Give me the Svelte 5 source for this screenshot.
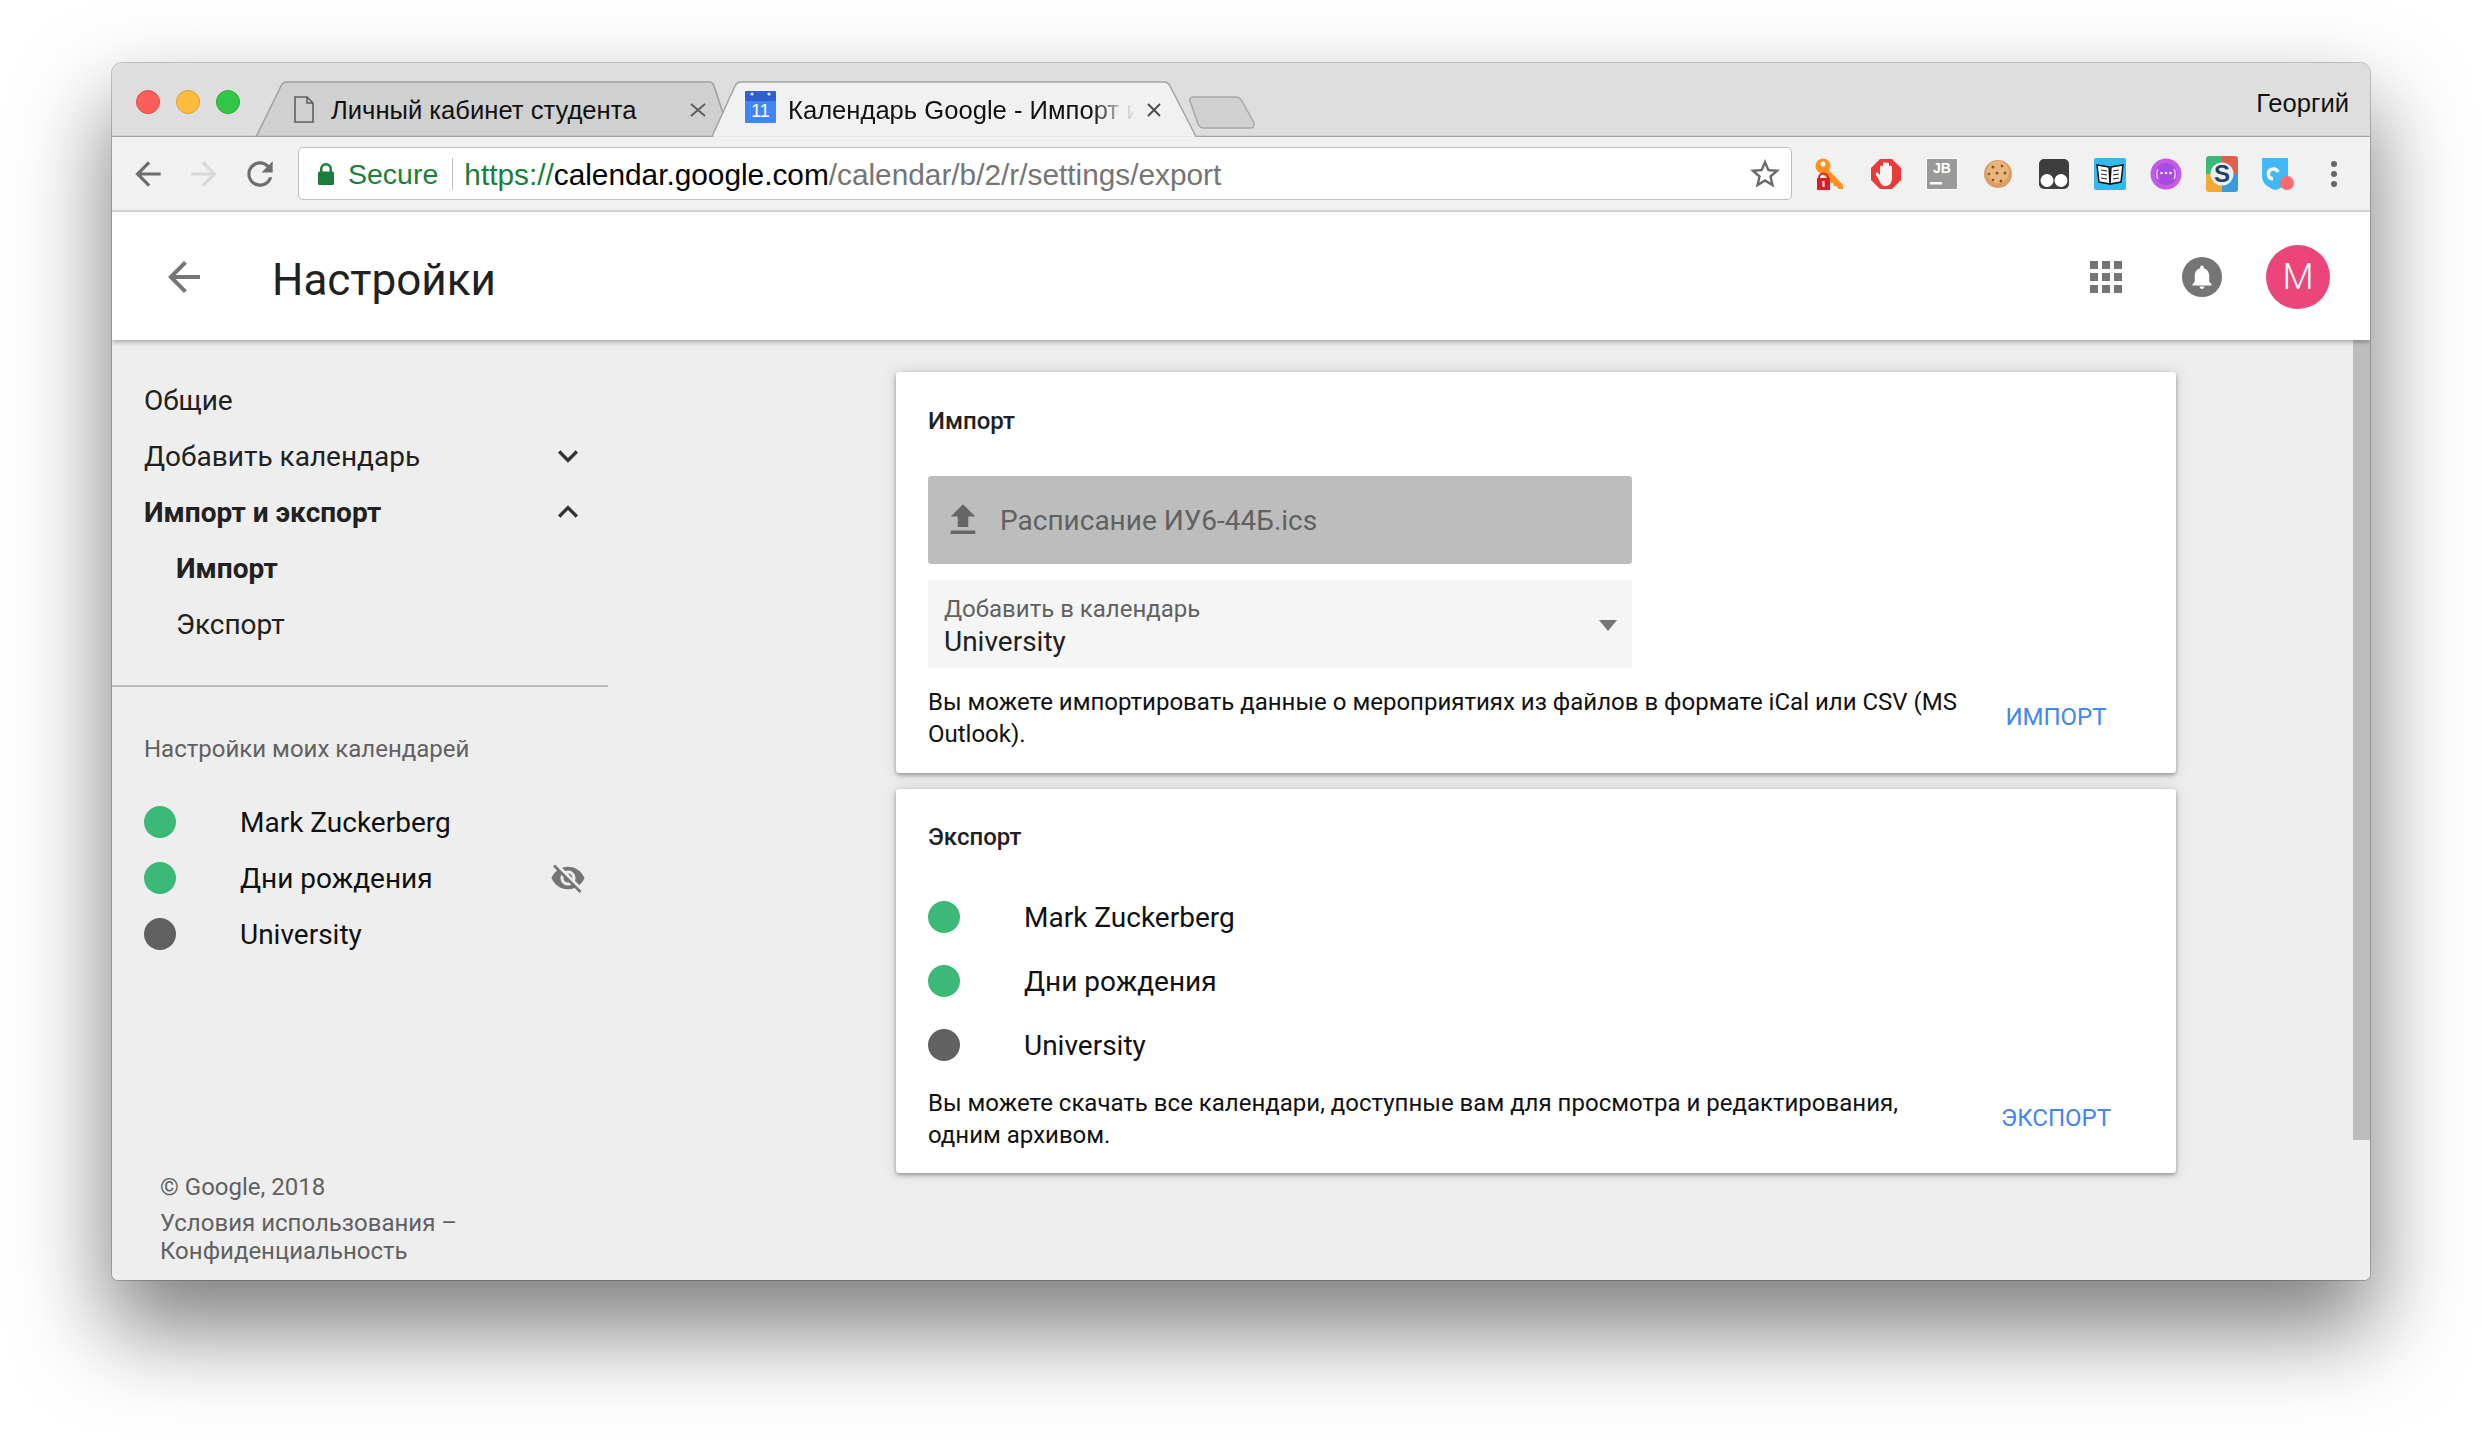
<script>
  const calendars = [
    { name: 'Mark Zuckerberg', color: '#3cb878' },
    { name: 'Дни рождения', color: '#3cb878', hidden: true },
    { name: 'University', color: '#616161' }
  ];
</script>

<div class="window">
  <div class="titlebar">
    <svg class="tabshapes" width="2258" height="74" viewBox="0 0 2258 74">
      <path d="M144 74 L169 23 Q171 19 175 19 L597 19 Q601 19 602 23 L613 56 L601 74 Z" fill="#d0d0d0" stroke="#a0a0a0" stroke-width="1.5"/>
      <path d="M0 73.5 H600 L623 23 Q625 19 629 19 L1052 19 Q1056 19 1058 23 L1084 73.5 H2258" fill="#f1f1f1" stroke="#a4a4a4" stroke-width="1.5"/>
      <path d="M1078 38 Q1077 34 1082 34 H1123 Q1128 34 1130 38 L1142 60 Q1143 65 1138 65 H1092 Q1088 65 1086 61 Z" fill="#d0d0d0" stroke="#a8a8a8" stroke-width="1.5"/>
    </svg>
    <div class="lights">
      <span class="light red"></span><span class="light yellow"></span><span class="light green"></span>
    </div>
    <div class="tab first">
      <svg class="fileicon" width="20" height="27" viewBox="0 0 20 27"><path d="M1 1 H13 L19 7 V26 H1 Z M13 1 V7 H19" fill="none" stroke="#5f5f5f" stroke-width="1.6"/></svg>
      <span class="tabtitle">Личный кабинет студента</span>
      <svg class="close" width="16" height="14" viewBox="0 0 16 14"><path d="M1 1 L15 13 M15 1 L1 13" stroke="#5a5a5a" stroke-width="1.8"/></svg>
    </div>
    <div class="tab second">
      <svg class="calfav" width="31" height="32" viewBox="0 0 31 32">
        <rect x="0" y="3" width="31" height="29" rx="1" fill="#4285f4"/>
        <rect x="0" y="0" width="31" height="10" rx="1" fill="#2f5fcf"/>
        <circle cx="7" cy="3" r="1.6" fill="#dfe6f7"/><circle cx="24" cy="3" r="1.6" fill="#dfe6f7"/>
        <text x="15.5" y="26" text-anchor="middle" class="caltext">11</text>
      </svg>
      <span class="tabtitle fade">Календарь Google - Импорт и</span>
      <svg class="close" width="14" height="14" viewBox="0 0 14 14"><path d="M1 1 L13 13 M13 1 L1 13" stroke="#4a4a4a" stroke-width="1.8"/></svg>
    </div>
    <div class="user">Георгий</div>
  </div>

  <div class="toolbar">
    <div class="navbtns">
      <svg width="38" height="38" viewBox="0 0 24 24"><path fill="#6e6e6e" d="M20 11H7.83l5.59-5.59L12 4l-8 8 8 8 1.41-1.41L7.83 13H20v-2z"/></svg>
      <svg width="38" height="38" viewBox="0 0 24 24"><path fill="#d8d8d8" d="M4 11h12.17l-5.59-5.59L12 4l8 8-8 8-1.41-1.41L16.17 13H4v-2z"/></svg>
      <svg width="38" height="38" viewBox="0 0 24 24"><path fill="#6e6e6e" d="M17.65 6.35C16.2 4.9 14.21 4 12 4c-4.42 0-7.99 3.58-7.99 8s3.57 8 7.99 8c3.73 0 6.84-2.55 7.73-6h-2.08c-.82 2.33-3.04 4-5.65 4-3.31 0-6-2.69-6-6s2.69-6 6-6c1.66 0 3.14.69 4.22 1.78L13 11h7V4l-2.35 2.35z"/></svg>
    </div>
    <div class="omnibox">
      <svg class="lock" width="18" height="22" viewBox="0 0 18 22"><path fill="#188038" d="M15.5 8.5H15V6A6 6 0 0 0 3 6v2.5h-.5A1.5 1.5 0 0 0 1 10v10.500A1.500 1.500 0 0 0 2.500 22h13a1.500 1.500 0 0 0 1.500-1.500V10a1.500 1.500 0 0 0-1.500-1.500zM12.500 8.500h-7V6a3.500 3.500 0 0 1 7 0z"/></svg>
      <span class="secure">Secure</span>
      <span class="omnidiv"></span>
      <span class="url"><span class="https">https://</span><span class="host">calendar.google.com</span><span class="path">/calendar/b/2/r/settings/export</span></span>
      <svg class="star" width="36" height="36" viewBox="0 0 24 24"><path fill="#6a6a6a" d="M22 9.24l-7.190-.62L12 2 9.190 8.630 2 9.240l5.460 4.730L5.820 21 12 17.270 18.180 21l-1.630-7.030L22 9.240zM12 15.400l-3.760 2.270 1-4.280-3.320-2.880 4.380-.38L12 6.100l1.710 4.040 4.380.38-3.320 2.880 1 4.280L12 15.400z"/></svg>
    </div>
    <div class="extensions">
      <svg width="32" height="32" viewBox="0 0 32 32">
        <circle cx="9" cy="8" r="7.500" fill="#ff9020"/><path d="M9 6 L29 27 V31 H25 L22 28 L20 28 L19 25 L17 25 L6 13Z" fill="#ff9020"/>
        <circle cx="9" cy="6" r="2.500" fill="#fff"/>
        <path d="M5 20 a4.500 4.500 0 0 1 9 0" fill="none" stroke="#d9202a" stroke-width="2"/><rect x="3" y="20" width="13" height="12" fill="#d9202a"/><rect x="8.500" y="23" width="2" height="6" fill="#fff"/>
      </svg>
      <svg width="32" height="32" viewBox="0 0 32 32">
        <path d="M10 1 H22 L31 10 V22 L22 31 H10 L1 22 V10 Z" fill="#ea3a3a"/>
        <path d="M10 15 V9 a1.500 1.500 0 0 1 3 0 V5.500 a1.500 1.500 0 0 1 3 0 V6 a1.500 1.500 0 0 1 3 0 V9 a1.500 1.500 0 0 1 3 0 V20 c0 5-3 8-6 8 c-4 0-5-2-7-6 l-3-5 c-1-2 1-3 2-2 l2 2z" fill="#f4f4f4"/>
      </svg>
      <svg width="32" height="32" viewBox="0 0 32 32">
        <rect width="32" height="32" fill="#fff"/><rect x="1" y="1" width="30" height="30" fill="#9a9a9a"/>
        <text x="16" y="15" text-anchor="middle" class="jbtext">JB</text><rect x="4" y="24" width="12" height="2.500" fill="#fff"/>
      </svg>
      <svg width="32" height="32" viewBox="0 0 32 32">
        <circle cx="16" cy="16" r="14" fill="#d9a066"/><circle cx="16" cy="14" r="11" fill="#e8b57c"/>
        <g fill="#8a5526"><circle cx="11" cy="9" r="1.500"/><circle cx="20" cy="8" r="1.300"/><circle cx="7" cy="16" r="1.300"/><circle cx="15" cy="15" r="1.500"/><circle cx="23" cy="15" r="1.500"/><circle cx="11" cy="22" r="1.300"/><circle cx="19" cy="23" r="1.500"/></g>
      </svg>
      <svg width="32" height="32" viewBox="0 0 32 32">
        <rect x="1" y="1" width="30" height="30" rx="5" fill="#3e3e3e"/>
        <circle cx="9" cy="22.500" r="6.500" fill="#fff"/><circle cx="23" cy="22.500" r="6.500" fill="#fff"/>
      </svg>
      <svg width="32" height="32" viewBox="0 0 32 32">
        <rect width="32" height="32" rx="2" fill="#35b8ec"/>
        <path d="M3 7 L15 9 L16 26 L5 24Z M29 7 L17 9 L16 26 L27 24Z" fill="#fff" stroke="#111" stroke-width="1.500"/>
        <path d="M7 12 L13 13 M7 16 L13 17 M7 20 L13 21 M25 12 L19 13 M25 16 L19 17 M25 20 L19 21" stroke="#222" stroke-width="1.200"/>
      </svg>
      <svg width="32" height="32" viewBox="0 0 32 32">
        <circle cx="16" cy="16" r="15.500" fill="#c25be8"/><circle cx="16" cy="16" r="11" fill="#a94be0"/>
        <path d="M8 11 Q5.500 16 8 21 M24 11 Q26.500 16 24 21" fill="none" stroke="#e6c2f5" stroke-width="1.500"/>
        <circle cx="11.500" cy="15" r="1.300" fill="#eee"/><circle cx="16" cy="15" r="1.300" fill="#eee"/><circle cx="20.500" cy="15" r="1.300" fill="#eee"/>
      </svg>
      <svg width="32" height="36" viewBox="0 0 32 36">
        <path d="M3 0 H16 V18 H0 V3 A3 3 0 0 1 3 0Z" fill="#3cb878"/><path d="M16 0 H29 A3 3 0 0 1 32 3 V18 H16Z" fill="#e0604f"/>
        <path d="M0 18 H16 V36 H3 A3 3 0 0 1 0 33Z" fill="#f3a833"/><path d="M16 18 H32 V33 A3 3 0 0 1 29 36 H16Z" fill="#3a9bd9"/>
        <circle cx="16" cy="18" r="11.500" fill="#e9eef2"/>
        <text x="16" y="26" text-anchor="middle" class="stext">S</text>
      </svg>
      <svg width="32" height="32" viewBox="0 0 32 32">
        <path d="M0 0 H26 V20 C26 27 18 31 13 32 C7 30 0 26 0 18 Z" fill="#41b8f8"/>
        <path d="M16 14 a5 5 0 1 0 -5 7" fill="none" stroke="#fff" stroke-width="3.500"/>
        <circle cx="25" cy="25" r="7" fill="#fa6a70"/>
      </svg>
      <svg class="menu" width="8" height="28" viewBox="0 0 8 28"><circle cx="4" cy="4" r="3" fill="#666"/><circle cx="4" cy="14" r="3" fill="#666"/><circle cx="4" cy="24" r="3" fill="#666"/></svg>
    </div>
  </div>

  <header class="appbar">
    <svg class="backarrow" width="48" height="48" viewBox="0 0 24 24"><path fill="#757575" d="M20 11H7.830l5.590-5.590L12 4l-8 8 8 8 1.410-1.410L7.830 13H20v-2z"/></svg>
    <h1>Настройки</h1>
    <svg class="apps" width="32" height="32" viewBox="0 0 32 32">
      {#each [0, 12, 24] as y}{#each [0, 12, 24] as x}<rect {x} {y} width="8" height="8" fill="#757575"/>{/each}{/each}
    </svg>
    <svg class="bell" width="40" height="40" viewBox="0 0 40 40">
      <circle cx="20" cy="20" r="20" fill="#757575"/>
      <path transform="translate(5.600 5.600) scale(1.200)" fill="#fff" d="M12 22c1.100 0 2-.9 2-2h-4c0 1.100.89 2 2 2zm6-6v-5c0-3.070-1.640-5.640-4.500-6.320V4c0-.83-.67-1.500-1.500-1.500s-1.500.67-1.500 1.500v.68C7.630 5.360 6 7.920 6 11v5l-2 2v1h16v-1l-2-2z"/>
    </svg>
    <div class="avatar">M</div>
  </header>

  <div class="body">
    <aside class="sidebar">
      <nav>
        <div class="item">Общие</div>
        <div class="item">Добавить календарь
          <svg class="chev" width="40" height="40" viewBox="0 0 24 24"><path fill="#333" d="M16.590 8.590L12 13.170 7.410 8.590 6 10l6 6 6-6z"/></svg>
        </div>
        <div class="item strong">Импорт и экспорт
          <svg class="chev" width="40" height="40" viewBox="0 0 24 24"><path fill="#333" d="M12 8l-6 6 1.410 1.410L12 10.830l4.590 4.580L18 14z"/></svg>
        </div>
        <div class="item sub strong">Импорт</div>
        <div class="item sub">Экспорт</div>
      </nav>
      <div class="divider"></div>
      <div class="sidehead">Настройки моих календарей</div>
      <div class="callist">
        {#each calendars as c}
          <div class="calrow">
            <span class="dot" style="background:{c.color}"></span>
            <span class="calname">{c.name}</span>
            {#if c.hidden}
              <svg class="eye" width="36" height="36" viewBox="0 0 24 24"><path fill="#757575" d="M12 7c2.760 0 5 2.240 5 5 0 .65-.13 1.260-.36 1.830l2.920 2.920c1.510-1.260 2.700-2.890 3.430-4.750-1.730-4.390-6-7.500-11-7.500-1.400 0-2.740.25-3.980.7l2.160 2.160C10.740 7.130 11.350 7 12 7zM2 4.270l2.280 2.280.46.46C3.080 8.300 1.780 10.020 1 12c1.730 4.390 6 7.500 11 7.500 1.550 0 3.030-.3 4.380-.84l.42.42L19.730 22 21 20.730 3.270 3 2 4.270zM7.530 9.800l1.550 1.550c-.05.21-.08.43-.08.65 0 1.660 1.340 3 3 3 .22 0 .44-.03.65-.08l1.550 1.550c-.67.33-1.410.53-2.200.53-2.760 0-5-2.240-5-5 0-.79.2-1.530.53-2.200zm4.310-.78l3.150 3.150.02-.16c0-1.660-1.340-3-3-3l-.17.01z"/></svg>
            {/if}
          </div>
        {/each}
      </div>
      <footer class="sidefoot">
        <div class="copy">© Google, 2018</div>
        <div>Условия использования –</div>
        <div>Конфиденциальность</div>
      </footer>
    </aside>

    <main class="content">
      <section class="card importcard">
        <h2>Импорт</h2>
        <div class="upload">
          <svg width="42" height="42" viewBox="0 0 24 24"><path fill="#666" d="M9 16h6v-6h4l-7-7-7 7h4zm-4 2h14v2H5z"/></svg>
          <span>Расписание ИУ6-44Б.ics</span>
        </div>
        <div class="select">
          <div class="sellabel">Добавить в календарь</div>
          <div class="selvalue">University</div>
          <span class="selarrow"></span>
        </div>
        <div class="cardfoot">
          <p>Вы можете импортировать данные о мероприятиях из файлов в формате iCal или CSV (MS Outlook).</p>
          <span class="action">ИМПОРТ</span>
        </div>
      </section>

      <section class="card exportcard">
        <h2>Экспорт</h2>
        <div class="explist">
          {#each calendars as c}
            <div class="exprow">
              <span class="dot" style="background:{c.color}"></span>
              <span class="expname">{c.name}</span>
            </div>
          {/each}
        </div>
        <div class="cardfoot second">
          <p>Вы можете скачать все календари, доступные вам для просмотра и редактирования, одним архивом.</p>
          <span class="action">ЭКСПОРТ</span>
        </div>
      </section>
    </main>
    <div class="scrollbar"></div>
  </div>
</div>

<style>
  :global(body) { margin: 0; background: #fff; overflow: hidden; height: 1440px; }
  .window {
    position: relative;
    width: 2258px; height: 1217px;
    margin: 63px 0 0 112px;
    border-radius: 10px 10px 6px 6px;
    overflow: hidden;
    font-family: Roboto, sans-serif;
    color: #212121;
    box-shadow: 0 0 0 1px rgba(0,0,0,.2), 0 46px 90px 4px rgba(0,0,0,.5);
  }
  .titlebar {
    position: relative;
    height: 74px;
    background: #dedede;
    display: flex;
    align-items: flex-start;
    font-family: "Liberation Sans", sans-serif;
    color: #111;
    box-sizing: border-box;
  }
  .tabshapes { position: absolute; left: 0; top: 0; }
  .lights { position: relative; display: flex; gap: 16px; margin: 27px 0 0 24px; width: 120px; flex: none; }
  .light { width: 24px; height: 24px; border-radius: 50%; box-sizing: border-box; }
  .red { background: #fc5f5a; border: 1px solid #e04a45; }
  .yellow { background: #fdbc3d; border: 1px solid #dfa030; }
  .green { background: #33c748; border: 1px solid #27ab38; }
  .tab { position: relative; display: flex; align-items: center; height: 42px; margin-top: 26px; flex: none; }
  .tab.first { margin-left: 38px; width: 420px; }
  .fileicon { margin-right: 17px; flex: none; margin-top: -2px; }
  .tabtitle { font-size: 25.600px; white-space: nowrap; }
  .tab.first .close { margin-left: 54px; flex: none; }
  .tab.second { margin-left: 31px; width: 420px; }
  .calfav { flex: none; margin-right: 12px; margin-top: -6px; }
  .caltext { font: 18px "Liberation Sans", sans-serif; fill: #fff; }
  .jbtext { font: 700 14px "Liberation Sans", sans-serif; fill: #fff; }
  .stext { font: 700 24px "Liberation Sans", sans-serif; fill: #24425e; }
  .fade {
    width: 345px; flex: none;
    -webkit-mask-image: linear-gradient(to right, #000 305px, rgba(0,0,0,.12) 335px);
    mask-image: linear-gradient(to right, #000 305px, rgba(0,0,0,.12) 335px);
  }
  .tab.second .close { margin-left: 14px; flex: none; }
  .user { position: absolute; right: 21px; top: 25px; font-size: 25.600px; line-height: 30px; }

  .toolbar {
    height: 75px;
    background: #f1f1f1;
    border-bottom: 2px solid #d8d8d8;
    box-sizing: border-box;
    display: flex;
    align-items: center;
  }
  .navbtns { display: flex; align-items: center; width: 186px; padding-left: 17px; gap: 18px; box-sizing: border-box; flex: none; }
  .omnibox {
    width: 1494px; height: 53px;
    background: #fff;
    border: 1.500px solid #bdbdbd;
    border-radius: 5px;
    box-sizing: border-box;
    display: flex;
    align-items: center;
    padding-left: 18px;
    font-family: "Liberation Sans", sans-serif;
    flex: none;
  }
  .lock { flex: none; margin-right: 13px; }
  .secure { color: #188038; font-size: 28.500px; padding-top: 2px; }
  .omnidiv { width: 1px; height: 32px; background: #c0c0c0; margin: 0 11px 0 14px; flex: none; }
  .url { font-size: 29.800px; white-space: nowrap; flex: 1; padding-top: 2px; }
  .https { color: #188038; }
  .host { color: #000; }
  .path { color: #757575; }
  .star { flex: none; margin-right: 8px; }
  .extensions { display: flex; align-items: center; gap: 24px; margin-left: 22px; }
  .extensions svg { flex: none; }
  .extensions .menu { margin-left: 12px; }

  .appbar {
    position: relative;
    z-index: 2;
    height: 128px;
    background: #fff;
    display: flex;
    align-items: center;
    box-shadow: 0 2px 5px rgba(0,0,0,.3);
    padding-top: 1px;
    box-sizing: border-box;
  }
  .backarrow { margin-left: 48px; flex: none; }
  h1 { margin: 6px 0 0 64px; font-size: 44px; font-weight: 400; color: #212121; flex: 1; }
  .bell { margin-left: 60px; flex: none; }
  .avatar {
    width: 64px; height: 64px; border-radius: 50%;
    background: #ec4579; color: #fff;
    font-size: 36px; font-weight: 300;
    display: flex; align-items: center; justify-content: center;
    margin: 0 40px 0 44px; flex: none;
  }

  .body { position: relative; display: flex; height: 940px; background: #eee; }
  .sidebar {
    width: 496px; height: 940px; flex: none;
    display: flex; flex-direction: column;
    box-sizing: border-box;
    padding-top: 33px;
  }
  .item {
    position: relative;
    height: 56px;
    line-height: 56px;
    padding-left: 32px;
    font-size: 28px;
    color: #212121;
  }
  .item.sub { padding-left: 64px; }
  .strong { font-weight: 700; }
  .chev { position: absolute; left: 436px; top: 7px; }
  .divider { height: 2px; background: #bdbdbd; margin-top: 32px; }
  .sidehead { margin: 46px 0 0 32px; height: 32px; line-height: 32px; font-size: 24px; color: #616161; }
  .callist { margin-top: 29px; }
  .calrow { position: relative; height: 56px; display: flex; align-items: center; padding-left: 32px; }
  .dot { width: 32px; height: 32px; border-radius: 50%; flex: none; }
  .calname { margin-left: 64px; font-size: 28px; color: #111; }
  .eye { position: absolute; left: 438px; top: 10px; }
  .sidefoot {
    margin-top: auto;
    padding: 0 0 15px 48px;
    font-size: 24px; line-height: 28px; color: #616161;
  }
  .copy { margin-bottom: 8px; }

  .content { margin-left: 288px; padding-top: 32px; width: 1280px; flex: none; display: flex; flex-direction: column; gap: 16px; }
  .card {
    background: #fff;
    border-radius: 3px;
    box-shadow: 0 2px 4px rgba(0,0,0,.35), 0 0 16px rgba(0,0,0,.12);
    padding: 0 32px;
    box-sizing: border-box;
  }
  .importcard { height: 401px; padding-top: 33px; }
  .exportcard { height: 384px; padding-top: 32px; }
  h2 { margin: 0; height: 32px; line-height: 32px; font-size: 24px; font-weight: 500; color: #212121; }
  .upload {
    width: 704px; height: 88px; margin-top: 39px;
    background: #bdbdbd; border-radius: 3px;
    display: flex; align-items: center;
    padding-left: 14px; box-sizing: border-box;
    color: #616161; font-size: 28px;
  }
  .upload span { margin-left: 16px; }
  .select {
    position: relative;
    width: 704px; height: 88px; margin-top: 16px;
    background: #f5f5f5; border-radius: 3px;
    padding: 14px 16px 0; box-sizing: border-box;
  }
  .sellabel { font-size: 24px; line-height: 30px; color: #616161; }
  .selvalue { font-size: 28px; line-height: 36px; color: #212121; }
  .selarrow {
    position: absolute; right: 15px; top: 40px;
    border-left: 9px solid transparent; border-right: 9px solid transparent; border-top: 11px solid #757575;
  }
  .cardfoot { display: flex; justify-content: space-between; align-items: center; margin-top: 19px; }
  .cardfoot p { margin: 0; width: 1035px; font-size: 24px; line-height: 31.500px; color: #111; }
  .cardfoot.second { margin-top: 11px; }
  .action { width: 130px; margin-right: 23px; margin-top: -3px; text-align: center; font-size: 24px; font-weight: 400; color: #4285f4; white-space: nowrap; flex: none; }
  .explist { margin-top: 32px; }
  .exprow { height: 64px; display: flex; align-items: center; }
  .expname { margin-left: 64px; font-size: 28px; color: #111; }
  .scrollbar { position: absolute; right: 0; top: 0; width: 17px; height: 800px; background: #bdbdbd; }
</style>
